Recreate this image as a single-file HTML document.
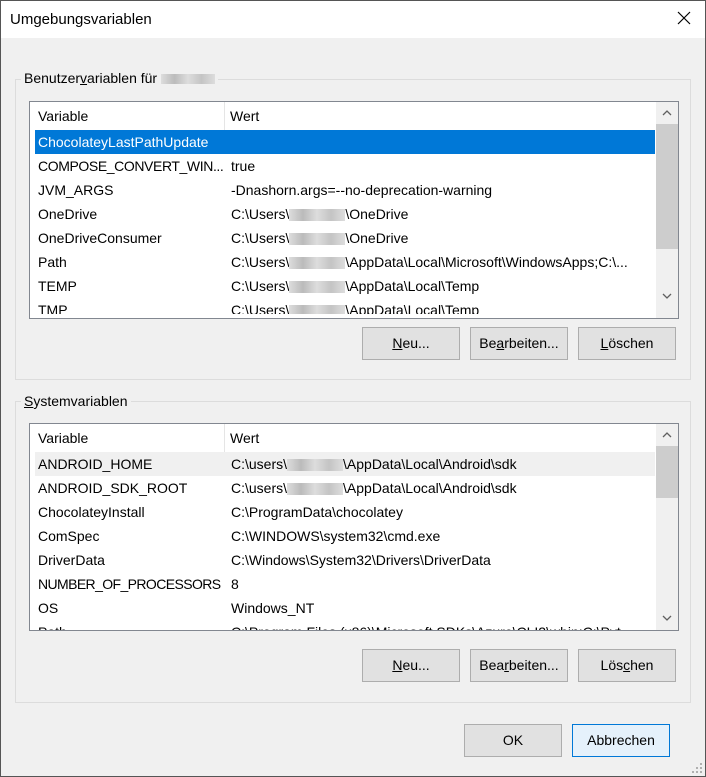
<!DOCTYPE html><html><head><style>
*{margin:0;padding:0;box-sizing:border-box}
body{width:706px;height:777px;background:#f0f0f0;font-family:"Liberation Sans",sans-serif;font-size:14px;color:#000;position:relative;overflow:hidden}
.abs{position:absolute}
.win{left:0;top:0;width:706px;height:777px;border:1px solid #555}
.title{left:1px;top:1px;width:704px;height:37px;background:#fff}
.gb{border:1px solid #dcdcdc}
.gl{background:#f0f0f0;padding:0 3px}
.lb{background:#fff;border:1px solid #828790;overflow:hidden}
.clip{position:absolute;left:0;top:0;width:625px;overflow:hidden}
.row{position:absolute;left:5px;height:24px;line-height:24px;white-space:nowrap;width:620px}
.row span{position:absolute;left:3px}
.row span.v{left:196px}
.hdr{position:absolute;left:0;top:0;height:28px;line-height:28px;width:625px}
.btn{position:absolute;height:33px;background:#e1e1e1;border:1px solid #adadad;text-align:center;line-height:31px}
.sb{position:absolute;right:0;top:0;width:22px;background:#f0f0f0}
.blur{display:inline-block;width:56px;height:12px;background:linear-gradient(90deg,#ddd,#bbb,#ddd,#c4c4c4,#ddd);vertical-align:middle}
u{text-decoration:underline}
</style></head><body>
<div class="abs win"></div>
<div class="abs title"></div>
<div class="abs" style="left:10px;top:11px;font-size:15px">Umgebungsvariablen</div>
<svg class="abs" style="left:677px;top:11px" width="14" height="14"><path d="M1 1L13 13M13 1L1 13" stroke="#000" stroke-width="1.2"/></svg>

<!-- group 1 -->
<div class="abs gb" style="left:15px;top:79px;width:676px;height:301px"></div>
<div class="abs gl" style="left:21px;top:70px">Benutzer<u>v</u>ariablen für <span class="blur" style="width:54px;height:10px"></span></div>
<div class="abs lb" style="left:29px;top:101px;width:650px;height:218px">
 <div class="hdr"><span class="abs" style="left:8px">Variable</span><div class="abs" style="left:194px;top:0;width:1px;height:28px;background:#e5e5e5"></div><span class="abs" style="left:200px">Wert</span></div>
 <div class="clip" style="height:212px">
 <div class="row" style="top:28px;background:#0078d7;color:#fff"><span>ChocolateyLastPathUpdate</span></div>
 <div class="row" style="top:52px"><span style="letter-spacing:-0.4px">COMPOSE_CONVERT_WIN...</span><span class="v">true</span></div>
 <div class="row" style="top:76px"><span>JVM_ARGS</span><span class="v">-Dnashorn.args=--no-deprecation-warning</span></div>
 <div class="row" style="top:100px"><span>OneDrive</span><span class="v">C:\Users\<span class="blur" style="position:static"></span>\OneDrive</span></div>
 <div class="row" style="top:124px"><span>OneDriveConsumer</span><span class="v">C:\Users\<span class="blur" style="position:static"></span>\OneDrive</span></div>
 <div class="row" style="top:148px"><span>Path</span><span class="v">C:\Users\<span class="blur" style="position:static"></span>\AppData\Local\Microsoft\WindowsApps;C:\...</span></div>
 <div class="row" style="top:172px"><span>TEMP</span><span class="v">C:\Users\<span class="blur" style="position:static"></span>\AppData\Local\Temp</span></div>
 <div class="row" style="top:196px"><span>TMP</span><span class="v">C:\Users\<span class="blur" style="position:static"></span>\AppData\Local\Temp</span></div>
 </div>
 <div class="sb" style="height:216px">
  <svg class="abs" style="left:6px;top:8px" width="10" height="6"><path d="M1 5L5 1L9 5" stroke="#606060" fill="none" stroke-width="1.3"/></svg>
  <div class="abs" style="left:0;top:22px;width:22px;height:125px;background:#cdcdcd"></div>
  <svg class="abs" style="left:6px;top:191px" width="10" height="6"><path d="M1 1L5 5L9 1" stroke="#606060" fill="none" stroke-width="1.3"/></svg>
 </div>
</div>
<div class="btn" style="left:362px;top:327px;width:98px"><u>N</u>eu...</div>
<div class="btn" style="left:470px;top:327px;width:98px">Be<u>a</u>rbeiten...</div>
<div class="btn" style="left:578px;top:327px;width:98px"><u>L</u>öschen</div>

<!-- group 2 -->
<div class="abs gb" style="left:15px;top:401px;width:676px;height:302px"></div>
<div class="abs gl" style="left:21px;top:393px"><u>S</u>ystemvariablen</div>
<div class="abs lb" style="left:29px;top:423px;width:650px;height:208px">
 <div class="hdr"><span class="abs" style="left:8px">Variable</span><div class="abs" style="left:194px;top:0;width:1px;height:28px;background:#e5e5e5"></div><span class="abs" style="left:200px">Wert</span></div>
 <div class="clip" style="height:206px">
 <div class="row" style="top:28px;background:#f0f0f0"><span>ANDROID_HOME</span><span class="v">C:\users\<span class="blur" style="position:static"></span>\AppData\Local\Android\sdk</span></div>
 <div class="row" style="top:52px"><span>ANDROID_SDK_ROOT</span><span class="v">C:\users\<span class="blur" style="position:static"></span>\AppData\Local\Android\sdk</span></div>
 <div class="row" style="top:76px"><span>ChocolateyInstall</span><span class="v">C:\ProgramData\chocolatey</span></div>
 <div class="row" style="top:100px"><span>ComSpec</span><span class="v">C:\WINDOWS\system32\cmd.exe</span></div>
 <div class="row" style="top:124px"><span>DriverData</span><span class="v">C:\Windows\System32\Drivers\DriverData</span></div>
 <div class="row" style="top:148px"><span style="letter-spacing:-0.6px">NUMBER_OF_PROCESSORS</span><span class="v">8</span></div>
 <div class="row" style="top:172px"><span>OS</span><span class="v">Windows_NT</span></div>
 <div class="row" style="top:196px"><span>Path</span><span class="v">C:\Program Files (x86)\Microsoft SDKs\Azure\CLI2\wbin;C:\Pyt</span></div>
 </div>
 <div class="sb" style="height:206px">
  <svg class="abs" style="left:6px;top:8px" width="10" height="6"><path d="M1 5L5 1L9 5" stroke="#606060" fill="none" stroke-width="1.3"/></svg>
  <div class="abs" style="left:0;top:22px;width:22px;height:52px;background:#cdcdcd"></div>
  <svg class="abs" style="left:6px;top:191px" width="10" height="6"><path d="M1 1L5 5L9 1" stroke="#606060" fill="none" stroke-width="1.3"/></svg>
 </div>
</div>
<div class="btn" style="left:362px;top:649px;width:98px"><u>N</u>eu...</div>
<div class="btn" style="left:470px;top:649px;width:98px">Bea<u>r</u>beiten...</div>
<div class="btn" style="left:578px;top:649px;width:98px">Lös<u>c</u>hen</div>

<div class="btn" style="left:464px;top:724px;width:98px">OK</div>
<div class="btn" style="left:572px;top:724px;width:98px;background:#e5f1fb;border-color:#0078d7">Abbrechen</div>
<svg class="abs" style="left:692px;top:763px" width="12" height="12" fill="#b0b0b0"><rect x="8" y="0" width="2" height="2"/><rect x="4" y="4" width="2" height="2"/><rect x="8" y="4" width="2" height="2"/><rect x="0" y="8" width="2" height="2"/><rect x="4" y="8" width="2" height="2"/><rect x="8" y="8" width="2" height="2"/></svg>
</body></html>
